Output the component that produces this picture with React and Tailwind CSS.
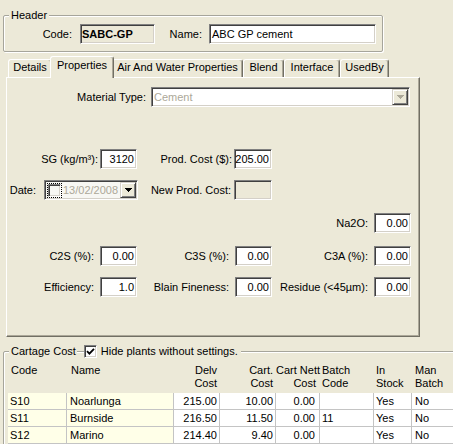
import React from "react";

const sunken =
  "border border-t-[#808080] border-l-[#808080] border-b-white border-r-white shadow-[inset_1px_1px_0_#404040,inset_-1px_-1px_0_#d4d0c8]";
const raised =
  "border border-t-[#d4d0c8] border-l-[#d4d0c8] border-b-[#404040] border-r-[#404040] shadow-[inset_1px_1px_0_#fff,inset_-1px_-1px_0_#808080]";

function Arrow({ color }) {
  return (
    <svg width="7" height="4" viewBox="0 0 7 4" shapeRendering="crispEdges">
      <path d="M0 0h7v1h-1v1h-1v1h-1v1h-1v-1h-1v-1h-1v-1h-1z" fill={color} />
    </svg>
  );
}

function Label({ w, children }) {
  return <div className={`${w} shrink-0 text-right whitespace-nowrap`}>{children}</div>;
}

function Field({ w, ml, value, disabled }) {
  return (
    <div
      className={`${w} ${ml} h-[20px] shrink-0 ${sunken} ${
        disabled ? "bg-[#ece9d8]" : "bg-white"
      } flex items-center justify-end pr-[2px]`}
    >
      {value}
    </div>
  );
}

const tabs = [
  ["Details", "w-[44px]", false],
  ["Properties", "w-[64px]", true],
  ["Air And Water Properties", "w-[131px]", false],
  ["Blend", "w-[41px]", false],
  ["Interface", "w-[56px]", false],
  ["UsedBy", "w-[49px]", false],
];

const rows = [
  ["S10", "Noarlunga", "215.00", "10.00", "0.00", "", "Yes", "No"],
  ["S11", "Burnside", "216.50", "11.50", "0.00", "11", "Yes", "No"],
  ["S12", "Marino", "214.40", "9.40", "0.00", "", "Yes", "No"],
];

const cellCls = [
  "pl-[2px] bg-[#ffffe8]",
  "pl-[3px] bg-[#ffffe8]",
  "text-right pr-[2px] bg-white",
  "text-right pr-[2px] bg-white",
  "text-right pr-[4px] bg-white",
  "pl-[2px] bg-white",
  "pl-[2px] bg-white",
  "pl-[3px] bg-white",
];

export default function App() {
  return (
    <div className="w-[453px] h-[444px] overflow-hidden bg-[#ece9d8] text-[11px] leading-[13px] text-black font-['Liberation_Sans',Arial,sans-serif] flex flex-col">
      {/* Header group */}
      <fieldset className="ml-[3px] mt-[9px] w-[380px] border border-[#a6a59b] rounded-[2px] shadow-[inset_1px_1px_0_#fff,1px_1px_0_#fff]">
        <legend className="ml-[5px] px-[2px] bg-[#ece9d8]">Header</legend>
        <div className="flex items-center pt-[2px] pb-[7px]">
          <Label w="w-[68px]">Code:</Label>
          <div className={`ml-[8px] w-[75px] h-[20px] ${sunken} bg-[#ece9d8] font-bold flex items-center pl-[1px]`}>
            SABC-GP
          </div>
          <Label w="w-[47px]">Name:</Label>
          <div className={`ml-[7px] w-[167px] h-[20px] ${sunken} bg-white flex items-center pl-[2px]`}>
            ABC GP cement
          </div>
        </div>
      </fieldset>

      {/* Tabs */}
      <div className="mt-[4px] ml-[8px] h-[21px] flex items-end">
        {tabs.map(([t, w, active]) => (
          <div
            key={t}
            className={`${w} shrink-0 text-center whitespace-nowrap border-t border-l border-r border-t-white border-l-white border-r-[#716f64] shadow-[inset_-1px_0_0_#aca899] rounded-t-[3px] bg-[#ece9d8] ${
              active ? "h-[22px] -mb-px -mx-[2px] relative z-10 pt-[2px]" : "h-[18px] pt-[1px]"
            }`}
          >
            {t}
          </div>
        ))}
      </div>

      {/* Tab panel */}
      <div className="ml-[6px] w-[414px] h-[260px] shrink-0 border border-t-white border-l-white border-r-[#716f64] border-b-[#716f64] shadow-[inset_-1px_-1px_0_#aca899] flex flex-col">
        {/* Material type */}
        <div className="mt-[9px] flex items-center h-[20px]">
          <Label w="w-[139px]">Material Type:</Label>
          <div className={`ml-[5px] w-[259px] h-[20px] ${sunken} bg-white flex items-center`}>
            <span className="pl-[2px] flex-1 text-[#aca899]">Cement</span>
            <div className={`mr-[1px] w-[16px] h-[16px] ${raised} bg-[#ece9d8] flex items-center justify-center`}>
              <Arrow color="#aca899" />
            </div>
          </div>
        </div>

        {/* SG / Prod cost */}
        <div className="mt-[42px] flex items-center h-[20px]">
          <Label w="w-[91px]">SG (kg/m³):</Label>
          <Field w="w-[37px]" ml="ml-[2px]" value="3120" />
          <Label w="w-[95px]">Prod. Cost ($):</Label>
          <Field w="w-[38px]" ml="ml-[2px]" value="205.00" />
        </div>

        {/* Date */}
        <div className="mt-[11px] flex items-center h-[20px]">
          <Label w="w-[29px]">Date:</Label>
          <div className={`ml-[8px] w-[94px] h-[20px] shrink-0 ${sunken} bg-[#f7f7f3] flex items-center`}>
            <div className="ml-[2px] w-[15px] h-[15px] border border-dotted border-black flex items-center justify-center">
              <div className={`w-[13px] h-[13px] ${sunken} bg-[#f7f7f3]`} />
            </div>
            <span className="ml-[1px] text-[#aca899] flex-1">13/02/2008</span>
            <div className={`mr-[1px] w-[16px] h-[16px] ${raised} bg-[#ece9d8] flex items-center justify-center`}>
              <Arrow color="#000" />
            </div>
          </div>
          <Label w="w-[93px]">New Prod. Cost:</Label>
          <Field w="w-[38px]" ml="ml-[3px]" value="" disabled />
        </div>

        {/* Na2O */}
        <div className="mt-[13px] flex items-center h-[20px]">
          <Label w="w-[361px]">Na2O:</Label>
          <Field w="w-[37px]" ml="ml-[6px]" value="0.00" />
        </div>

        {/* C2S / C3S / C3A */}
        <div className="mt-[13px] flex items-center h-[20px]">
          <Label w="w-[87px]">C2S (%):</Label>
          <Field w="w-[37px]" ml="ml-[6px]" value="0.00" />
          <Label w="w-[92px]">C3S (%):</Label>
          <Field w="w-[37px]" ml="ml-[6px]" value="0.00" />
          <Label w="w-[96px]">C3A (%):</Label>
          <Field w="w-[37px]" ml="ml-[6px]" value="0.00" />
        </div>

        {/* Efficiency / Blain / Residue */}
        <div className="mt-[11px] flex items-center h-[20px]">
          <Label w="w-[87px]">Efficiency:</Label>
          <Field w="w-[37px]" ml="ml-[6px]" value="1.0" />
          <Label w="w-[92px]">Blain Fineness:</Label>
          <Field w="w-[37px]" ml="ml-[6px]" value="0.00" />
          <Label w="w-[96px]">Residue (&lt;45µm):</Label>
          <Field w="w-[37px]" ml="ml-[6px]" value="0.00" />
        </div>
      </div>

      {/* Cartage cost group */}
      <fieldset className="ml-[3px] mt-[8px] w-[470px] h-[120px] shrink-0 border border-[#a6a59b] rounded-[2px] shadow-[inset_1px_1px_0_#fff,1px_1px_0_#fff]">
        <legend className="ml-[5px] px-[2px] bg-[#ece9d8]">
          <span className="inline-flex items-center">
            <span>Cartage Cost</span>
            <span className="ml-[1px] w-[7px] h-[2px] border-t border-b border-t-[#a6a59b] border-b-white" />
            <span className={`w-[13px] h-[13px] ${sunken} bg-white flex items-center justify-center`}>
              <svg width="9" height="9" viewBox="0 0 9 9">
                <path d="M1 4.2 L3.4 6.6 L8 1.8" stroke="#000" strokeWidth="1.8" fill="none" />
              </svg>
            </span>
            <span className="ml-[4px] pr-[1px]">Hide plants without settings.</span>
          </span>
        </legend>

        <div className="ml-[4px]">
          {/* header */}
          <div className="h-[35px] pt-[6px] grid grid-cols-[59px_107px_46px_56px_44px_54px_38px_50px]">
            <div className="pl-[3px]">Code</div>
            <div className="pl-[4px]">Name</div>
            <div className="text-right pr-[3px]">
              Delv
              <br />
              Cost
            </div>
            <div className="text-right pr-[3px]">
              Cart.
              <br />
              Cost
            </div>
            <div className="text-right pr-[4px] whitespace-nowrap">
              Cart Nett
              <br />
              Cost
            </div>
            <div className="pl-[2px]">
              Batch
              <br />
              Code
            </div>
            <div className="pl-[2px]">
              In
              <br />
              Stock
            </div>
            <div className="pl-[3px]">
              Man
              <br />
              Batch
            </div>
          </div>
          {/* rows */}
          {rows.map((r) => (
            <div
              key={r[0]}
              className="grid grid-cols-[59px_107px_46px_56px_44px_54px_38px_50px] border-b border-[#c4c4c4]"
            >
              {r.map((c, i) => (
                <div key={i} className={`h-[16px] leading-[16px] border-r border-[#c4c4c4] ${cellCls[i]}`}>
                  {c}
                </div>
              ))}
            </div>
          ))}
        </div>
      </fieldset>
    </div>
  );
}
